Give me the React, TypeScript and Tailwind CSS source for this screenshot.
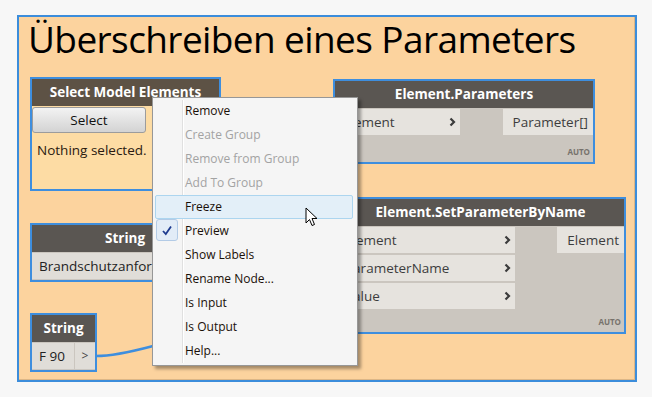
import type { ReactNode } from "react"

const font = { fontFamily: '"Open Sans", "Noto Sans", sans-serif' }

function Chevron() {
  return (
    <svg width="7" height="10" viewBox="0 0 7 10" className="shrink-0">
      <path d="M1.5 1.5 L5 5 L1.5 8.5" fill="none" stroke="#3b3b3b" strokeWidth="2.2" />
    </svg>
  )
}

interface NodeProps {
  x: number
  y: number
  w: number
  h: number
  title: string
  header?: string
  children: ReactNode
}

function Node({ x, y, w, h, title, header = "bg-[#5a5652]", children }: NodeProps) {
  return (
    <div
      className="absolute flex flex-col border-2 border-[#3e8ede]"
      style={{ left: x, top: y, width: w, height: h }}
    >
      <div className={`h-[27px] shrink-0 flex items-center justify-center text-white text-[13.5px] font-bold ${header}`}>
        {title}
      </div>
      {children}
    </div>
  )
}

function Port({ label, w }: { label: string; w: number }) {
  return (
    <div
      className="h-[26px] flex items-center justify-between pl-[8px] pr-[4px] bg-[#e6e3de] text-[13.5px] text-[#3d3d3d]"
      style={{ width: w }}
    >
      <span>{label}</span>
      <Chevron />
    </div>
  )
}

const items: { label: string; disabled?: boolean; hover?: boolean; checked?: boolean }[] = [
  { label: "Remove" },
  { label: "Create Group", disabled: true },
  { label: "Remove from Group", disabled: true },
  { label: "Add To Group", disabled: true },
  { label: "Freeze", hover: true },
  { label: "Preview", checked: true },
  { label: "Show Labels" },
  { label: "Rename Node..." },
  { label: "Is Input" },
  { label: "Is Output" },
  { label: "Help..." },
]

function ContextMenu() {
  return (
    <div className="absolute left-[152px] top-[97px] w-[206px] h-[269px] border border-[#979797] bg-[#f5f5f5] shadow-[3px_3px_3px_rgba(0,0,0,0.35)] pt-[1px]">
      <div className="absolute left-[29px] top-[2px] bottom-[2px] w-px bg-[#e0e0e0]" />
      <div className="absolute left-[30px] top-[2px] bottom-[2px] w-px bg-white" />
      {items.map((it) => (
        <div key={it.label} className="relative h-[24px] flex items-center pl-[32px] text-[12px]">
          {it.hover && (
            <div className="absolute left-[2px] right-[4px] top-[0px] bottom-[0px] rounded-[2px] border border-[#acd5ef] bg-[#e3eff8]" />
          )}
          {it.checked && (
            <div className="absolute left-[3px] top-[0px] w-[22px] h-[22px] rounded-[3px] border border-[#b3cbe6] bg-[#e2ecf7] flex items-center justify-center">
              <svg width="12" height="11" viewBox="0 0 12 11">
                <path d="M2 6 L4.8 9 L10 1.5" fill="none" stroke="#1d3a8f" strokeWidth="1.8" />
              </svg>
            </div>
          )}
          <span className={`relative ${it.disabled ? "text-[#a3a3a3]" : "text-[#1a1008]"}`}>{it.label}</span>
        </div>
      ))}
    </div>
  )
}

export default function App() {
  return (
    <div className="relative w-[652px] h-[397px] overflow-hidden bg-[#f7f7f7]" style={font}>
      <div className="absolute left-[17px] top-[15px] w-[620px] h-[367px] border-2 border-[#3c8ddb] bg-[#fcd39e] shadow-[inset_-1px_-1px_0_#dcb686]">
        <div className="pl-[9px] pt-[0px] text-[37px] leading-[44px] text-black tracking-[-0.6px]">
          Überschreiben eines Parameters
        </div>
      </div>

      {/* wire */}
      <svg className="absolute left-0 top-0" width="652" height="397">
        <path d="M96 356 C 150 356, 280 300, 335 296" fill="none" stroke="#3e8ede" strokeWidth="2.5" />
      </svg>

      <Node x={30} y={77} w={191} h={114} title="Select Model Elements" header="bg-[#5d5245]">
        <div className="flex-1 bg-[#fddca4] flex flex-col">
          <div className="mt-[1px] w-[114px] h-[26px] rounded-[3px] border border-[#9c9c9c] bg-gradient-to-b from-[#f3f3f3] to-[#d3d3d3] flex items-center justify-center text-[13.5px] text-[#111]">
            Select
          </div>
          <div className="pl-[5px] pt-[7px] text-[13.5px] text-[#2a1a10]">Nothing selected.</div>
        </div>
      </Node>

      <Node x={333} y={79} w={262} h={85} title="Element.Parameters">
        <div className="flex-1 bg-[#cbc6bf] relative">
          <div className="mt-[1px] flex justify-between">
            <Port label="Element" w={125} />
            <div className="h-[26px] w-[90px] bg-[#e6e3de] flex items-center justify-end pr-[5px] text-[13.5px] text-[#3d3d3d]">
              Parameter[]
            </div>
          </div>
          <div className="absolute right-[3px] bottom-[4px] text-[8px] font-bold text-[#77726c]">AUTO</div>
        </div>
      </Node>

      <Node x={335} y={197} w={291} h={137} title="Element.SetParameterByName">
        <div className="flex-1 bg-[#cbc6bf] relative">
          <div className="flex justify-between">
            <div className="flex flex-col gap-[2px] pt-[1px]">
              <Port label="Element" w={178} />
              <Port label="ParameterName" w={178} />
              <Port label="Value" w={178} />
            </div>
            <div className="mt-[1px] h-[26px] w-[67px] bg-[#e6e3de] flex items-center justify-end pr-[5px] text-[13.5px] text-[#3d3d3d]">
              Element
            </div>
          </div>
          <div className="absolute right-[3px] bottom-[4px] text-[8px] font-bold text-[#77726c]">AUTO</div>
        </div>
      </Node>

      <Node x={30} y={223} w={190} h={59} title="String">
        <div className="flex-1 bg-[#cbc6bf] pt-[1px]">
          <div className="h-[26px] bg-[#e0ddd8] flex items-center pl-[7px] text-[13.5px] text-[#222] whitespace-nowrap overflow-hidden">
            Brandschutzanforderung
          </div>
        </div>
      </Node>

      <Node x={30} y={313} w={67} h={59} title="String">
        <div className="flex-1 bg-[#cbc6bf] pt-[1px] flex gap-[1px]">
          <div className="w-[42px] h-[26px] bg-[#e0ddd8] flex items-center pl-[7px] text-[13.5px] text-[#222]">F 90</div>
          <div className="flex-1 h-[26px] bg-[#e0ddd8] flex items-center justify-center text-[12px] text-[#444]">&gt;</div>
        </div>
      </Node>

      <ContextMenu />

      {/* mouse cursor */}
      <svg className="absolute left-[305px] top-[207px]" width="14" height="21" viewBox="0 0 14 21">
        <path d="M1 1 L1 16 L4.5 12.5 L7 18.5 L9.5 17.5 L7 11.5 L12 11.5 Z" fill="white" stroke="black" strokeWidth="1" strokeLinejoin="round" />
      </svg>
    </div>
  )
}
